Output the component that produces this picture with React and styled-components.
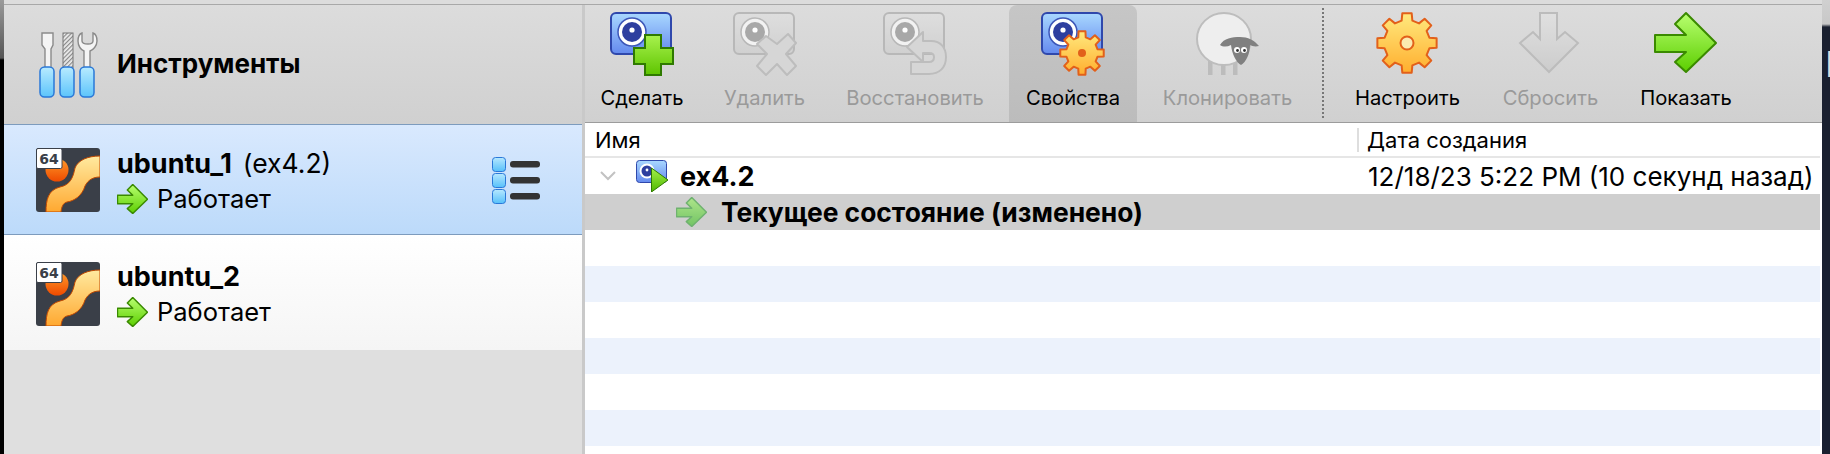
import React, { useId } from "react";
import styled, { createGlobalStyle } from "styled-components";

const Global = createGlobalStyle`
  html, body { margin: 0; padding: 0; background: #fff; }
  body { font-family: Inter, "Liberation Sans", Arial, sans-serif; color: #000; -webkit-font-smoothing: antialiased; }
`;

const Screen = styled.div`
  display: flex;
  width: 1830px;
  height: 454px;
  overflow: hidden;
`;
const LeftEdge = styled.div`
  width: 4px;
  flex: none;
  background: linear-gradient(#9a9a9a 0, #555 58px, #000 60px);
`;
const RightEdge = styled.div`
  width: 8px;
  flex: none;
  display: flex;
  flex-direction: column;
  background: linear-gradient(#d0d0d0 0, #c8c8c8 24px, #1a2030 27px);
  overflow: hidden;
`;
const EdgeGlyph = styled.span`
  margin: 46px 0 0 3px;
  font-size: 36px;
  line-height: 36px;
  color: #dcdcdc;
`;
const Window = styled.div`
  flex: 1;
  min-width: 0;
  display: flex;
  flex-direction: column;
`;
const TitleEdge = styled.div`
  height: 4px;
  flex: none;
  background: #dcdcdc;
  border-bottom: 1px solid #a8a8a8;
`;
const Body = styled.div`
  flex: 1;
  min-height: 0;
  display: flex;
`;
const Sidebar = styled.div`
  width: 578px;
  flex: none;
  display: flex;
  flex-direction: column;
  background: #dfdfdf;
  border-right: 3px solid #c9c9c9;
  box-sizing: content-box;
`;
const ToolsHeader = styled.div`
  height: 119px;
  flex: none;
  display: flex;
  align-items: flex-start;
  padding: 27px 0 0 34px;
  box-sizing: border-box;
  gap: 19px;
  background: linear-gradient(#dcdcdc, #d0d0d0);
`;
const ToolsTitle = styled.div`
  font-size: 26px;
  font-weight: 700;
  line-height: 28px;
  margin-top: 18px;
`;
const VmRow = styled.div`
  display: flex;
  align-items: flex-start;
  box-sizing: border-box;
  height: ${(p) => (p.$selected ? 111 : 115)}px;
  padding: ${(p) => (p.$selected ? 23 : 27)}px 42px 0 32px;
  gap: 17px;
  background: ${(p) =>
    p.$selected ? "linear-gradient(#d9e9fe, #bcdafa)" : "linear-gradient(#ffffff, #f5f5f5)"};
  border-top: ${(p) => (p.$selected ? "1px solid #7d9bbd" : "0")};
  border-bottom: ${(p) => (p.$selected ? "1px solid #7d9bbd" : "0")};
  box-shadow: ${(p) => (p.$selected ? "0 1px 0 #dfe4ea" : "none")};
`;
const VmInfo = styled.div`
  flex: 1;
  display: flex;
  flex-direction: column;
  gap: 5px;
`;
const VmName = styled.div`
  font-size: 27px;
  line-height: 30px;
  font-weight: 700;
`;
const VmSnapshot = styled.span`
  font-weight: 400;
  font-size: 26.5px;
  margin-left: 11px;
`;
const VmState = styled.div`
  display: flex;
  align-items: center;
  gap: 9px;
  font-size: 25.5px;
  line-height: 30px;
`;
const RowMenu = styled.div`
  margin-top: 9px;
  display: flex;
`;
const Main = styled.div`
  flex: 1;
  min-width: 0;
  display: flex;
  flex-direction: column;
`;
const Toolbar = styled.div`
  height: 118px;
  flex: none;
  display: flex;
  gap: 9px;
  box-sizing: border-box;
  padding-right: 2px;
  background: linear-gradient(#dcdcdc, #d0d0d0);
  border-bottom: 1px solid #9c9c9c;
`;
const ToolButton = styled.div`
  width: ${(p) => p.$width}px;
  flex: none;
  display: flex;
  flex-direction: column;
  align-items: center;
  padding-top: 7px;
  box-sizing: border-box;
  border-radius: 8px 8px 0 0;
  background: ${(p) => (p.$active ? "linear-gradient(#c6c6c6, #bcbcbc)" : "transparent")};
`;
const ToolLabel = styled.span`
  margin-top: 10px;
  font-size: 20.2px;
  line-height: 24px;
  white-space: nowrap;
  color: ${(p) => (p.$disabled ? "#9a9a9a" : "#000")};
`;
const ToolSeparator = styled.div`
  width: 0;
  flex: none;
  margin: 3px 5px 4px 4px;
  border-left: 2px dotted #777;
`;
const Table = styled.div`
  flex: 1;
  min-height: 0;
  margin-right: 2px;
  background: #fff;
  display: flex;
  flex-direction: column;
  overflow: hidden;
`;
const TableHead = styled.div`
  height: 35px;
  flex: none;
  display: grid;
  grid-template-columns: 772px 1fr;
  align-items: center;
  box-sizing: border-box;
  border-bottom: 2px solid #e6e6e6;
  font-size: 22px;
`;
const NameHead = styled.div`
  padding-left: 10px;
`;
const DateHead = styled.div`
  border-left: 2px solid #dedede;
  padding-left: 8px;
  line-height: 24px;
`;
const Row = styled.div`
  height: 36px;
  flex: none;
  display: grid;
  grid-template-columns: 772px 1fr;
  align-items: center;
  background: ${(p) => p.$bg};
`;
const TreeCell = styled.div`
  display: flex;
  align-items: center;
  padding-left: ${(p) => p.$indent}px;
  gap: ${(p) => p.$gap}px;
  font-size: ${(p) => p.$size}px;
  font-weight: 700;
  white-space: nowrap;
`;
const DateCell = styled.div`
  padding-left: 11px;
  font-size: 26px;
  white-space: nowrap;
`;
const ChevronBox = styled.span`
  display: flex;
  margin-right: 8px;
`;

const Grad = ({ id, from, to }) => (
  <defs>
    <linearGradient id={id} x1="0" y1="0" x2="0" y2="1">
      <stop offset="0" stopColor={from} />
      <stop offset="1" stopColor={to} />
    </linearGradient>
  </defs>
);

const Camera = ({ gray }) => {
  const id = useId();
  return (
    <>
      <Grad id={id} from={gray ? "#dedede" : "#a9d8ff"} to={gray ? "#d0d0d0" : "#6489ee"} />
      <rect x="1" y="1" width="60" height="41" rx="5" fill={`url(#${id})`} stroke={gray ? "#b8b8b8" : "#2f48ac"} strokeWidth="2" />
      <circle cx="22" cy="20" r="14" fill={gray ? "#f2f2f2" : "#fff"} stroke={gray ? "#b8b8b8" : "#3c56b8"} strokeWidth="1.5" />
      <circle cx="22" cy="20" r="10" fill={gray ? "#a8a8a8" : "#2e3f9f"} />
      <circle cx="22" cy="18" r="2.6" fill="#fff" />
    </>
  );
};

const gearPath = (cx, cy, R, r, n = 8) => {
  const pts = [];
  const step = (Math.PI * 2) / n;
  for (let i = 0; i < n; i++) {
    const a = i * step - Math.PI / 2;
    const w = step * 0.2;
    const w2 = step * 0.3;
    const p = (rad, ang) => `${(cx + rad * Math.cos(ang)).toFixed(2)} ${(cy + rad * Math.sin(ang)).toFixed(2)}`;
    pts.push(p(r, a - w2), p(R, a - w), p(R, a + w), p(r, a + w2));
  }
  return `M${pts.join(" L")} Z`;
};

const Gear = ({ cx, cy, R, r, hole, ring }) => {
  const id = useId();
  return (
    <>
      <Grad id={id} from="#ffe97e" to="#ffae2e" />
      <path d={gearPath(cx, cy, R, r)} fill={`url(#${id})`} stroke="#e2601a" strokeWidth="2" strokeLinejoin="round" />
      <circle cx={cx} cy={cy} r={hole} fill={ring ? "#fbe9b0" : "#e2601a"} stroke="#e2601a" strokeWidth={ring ? 2 : 0} />
    </>
  );
};

const Icon64 = ({ children }) => (
  <svg width="64" height="64" viewBox="0 0 64 64" style={{ overflow: "visible" }}>
    {children}
  </svg>
);

const TakeIcon = () => {
  const id = useId();
  return (
    <Icon64>
      <Camera />
      <Grad id={id} from="#a8f24e" to="#5ec400" />
      <polygon points="35,23 51,23 51,36 63,36 63,52 51,52 51,63 35,63 35,52 24,52 24,36 35,36" fill={`url(#${id})`} stroke="#2f7a00" strokeWidth="2" />
    </Icon64>
  );
};
const DeleteIcon = () => (
  <Icon64>
    <Camera gray />
    <polygon points="33,24 44,32 55,22 63,31 53,42 63,54 54,63 44,52 33,63 24,54 34,42 24,32" fill="#d6d6d6" stroke="#bdbdbd" strokeWidth="2" strokeLinejoin="round" />
  </Icon64>
);
const RestoreIcon = () => (
  <Icon64>
    <Camera gray />
    <path d="M40 20 L40 29 L48 29 C58 29 63 36 63 45 C63 56 56 62 46 62 L28 62 L28 50 L46 50 C50 50 51 48 51 45 C51 42 49 41 46 41 L40 41 L40 50 L24 35 Z" fill="#d6d6d6" stroke="#bdbdbd" strokeWidth="2" strokeLinejoin="round" />
  </Icon64>
);
const PropsIcon = () => (
  <Icon64>
    <Camera />
    <Gear cx={41} cy={41} R={22} r={16} hole={4} />
  </Icon64>
);
const SheepIcon = () => (
  <Icon64>
    {[12, 25, 37].map((x) => (
      <rect key={x} x={x} y="48" width="4.5" height="15" fill="#bcbcbc" />
    ))}
    <ellipse cx="28" cy="27" rx="27" ry="26" fill="#eeeeee" stroke="#bdbdbd" strokeWidth="2" />
    <path d="M24 33 C28 26 36 25 44 25 C52 25 58 28 63 34 C59 35 56 34 54 33 C54 42 50 50 45 53 C40 50 36 42 35 33 C31 35 27 35 24 33 Z" fill="#808080" />
    <circle cx="41" cy="38" r="3" fill="#fff" />
    <circle cx="48" cy="38" r="3" fill="#fff" />
    <circle cx="41.5" cy="38.5" r="1.4" fill="#333" />
    <circle cx="48.5" cy="38.5" r="1.4" fill="#333" />
  </Icon64>
);
const GearIcon = () => (
  <Icon64>
    <Gear cx={31} cy={31} R={30} r={23} hole={6.5} ring />
  </Icon64>
);
const DownIcon = () => {
  const id = useId();
  return (
    <Icon64>
      <Grad id={id} from="#e0e0e0" to="#cccccc" />
      <polygon points="21,1 38,1 38,27 46,20 59,31 30,60 1,31 14,20 21,27" fill={`url(#${id})`} stroke="#bcbcbc" strokeWidth="2" />
    </Icon64>
  );
};
const ARROW = "1,23 32,23 21,12 32,1 62,31 32,60 21,50 32,40 1,40";
const ArrowShape = ({ muted, strokeWidth }) => {
  const id = useId();
  return (
    <>
      <Grad id={id} from={muted ? "#aee58a" : "#b8ff70"} to={muted ? "#72c464" : "#5cce00"} />
      <polygon points={ARROW} fill={`url(#${id})`} stroke={muted ? "#6fb26f" : "#3a8a00"} strokeWidth={strokeWidth} strokeLinejoin="round" />
    </>
  );
};
const ShowIcon = () => (
  <Icon64>
    <ArrowShape strokeWidth={2} />
  </Icon64>
);
const SmallArrow = ({ muted }) => (
  <svg width="31" height="30" viewBox="0 0 63 61" style={{ flex: "none" }}>
    <ArrowShape muted={muted} strokeWidth={3} />
  </svg>
);

const ToolsIcon = () => {
  const h = useId();
  const b = useId();
  return (
    <svg width="60" height="66" viewBox="0 0 60 66">
      <defs>
        <pattern id={h} width="3" height="3" patternUnits="userSpaceOnUse" patternTransform="rotate(45)">
          <rect width="3" height="3" fill="#eee" />
          <rect width="1.2" height="3" fill="#888" />
        </pattern>
      </defs>
      <Grad id={b} from="#b8ebff" to="#5cc4fb" />
      <path d="M4 1 H15 V13 L13 17 V36 H7 V17 L4 13 Z" fill="#f4f4f4" stroke="#8a8a8a" strokeWidth="1.4" />
      <rect x="25" y="1" width="10" height="35" fill={`url(#${h})`} stroke="#777" strokeWidth="1" />
      <path d="M44 1 C41 2 40 6 40 9 C40 14 43 18 46 19 V36 H52 V19 C55 18 59 14 59 9 C59 6 58 2 55 1 V9 C55 11 53 12 50 12 C46 12 44 11 44 9 Z" fill="#f4f4f4" stroke="#8a8a8a" strokeWidth="1.4" />
      {[2, 22, 42].map((x) => (
        <rect key={x} x={x} y="35" width="14" height="30" rx="4.5" fill={`url(#${b})`} stroke="#2a78d8" strokeWidth="1.5" />
      ))}
    </svg>
  );
};

const VmIcon = () => {
  const o = useId();
  const s = useId();
  return (
    <svg width="64" height="64" viewBox="0 0 64 64" style={{ flex: "none" }}>
      <Grad id={o} from="#ff9a2a" to="#ee4a00" />
      <Grad id={s} from="#ffeaa0" to="#ffa830" />
      <rect width="64" height="64" rx="3" fill="#3a3f48" />
      <path d="M10 64 C10 52 12 42 24 39 C34 37 37 30 39 20 C42 12 52 8 64 8 L64 29 C57 29 52 32 49 38 C46 48 38 53 31 54 C27 55 25.5 59 25 64 Z" fill={`url(#${s})`} stroke="#c04800" strokeWidth="1" />
      <circle cx="21" cy="22" r="11.5" fill={`url(#${o})`} />
      <rect x="0.5" y="0.5" width="25.5" height="20" rx="1.5" fill="#fff" stroke="#3a3f48" strokeWidth="1" />
      <text x="13" y="16" textAnchor="middle" fontSize="14" fontWeight="700" fill="#3a3f48" fontFamily="DejaVu Sans, sans-serif">64</text>
    </svg>
  );
};

const ListIcon = () => {
  const b = useId();
  return (
    <svg width="48" height="47" viewBox="0 0 48 47">
      <Grad id={b} from="#b6e8ff" to="#56c0fa" />
      {[0, 16, 32].map((y) => (
        <g key={y}>
          <rect x="0.5" y={y + 0.5} width="13" height="14" rx="3" fill={`url(#${b})`} stroke="#2a78d8" />
          <rect x="18" y={y + 4} width="30" height="6.5" rx="3" fill="#333" />
        </g>
      ))}
    </svg>
  );
};

const SnapshotIcon = () => {
  const c = useId();
  const g = useId();
  return (
    <svg width="32" height="32" viewBox="0 0 32 32" style={{ flex: "none" }}>
      <Grad id={c} from="#a9d8ff" to="#6489ee" />
      <Grad id={g} from="#a4f04a" to="#4fb800" />
      <rect x="0.5" y="0.5" width="30" height="22" rx="3" fill={`url(#${c})`} stroke="#2f48ac" />
      <circle cx="11" cy="11" r="7.5" fill="#fff" />
      <circle cx="11" cy="11" r="5.5" fill="#2e3f9f" />
      <circle cx="11" cy="10" r="1.4" fill="#fff" />
      <polygon points="15.5,8 32,20 15.5,32" fill={`url(#${g})`} stroke="#2f7a00" />
    </svg>
  );
};

const Chevron = () => (
  <svg width="16" height="10" viewBox="0 0 16 10" style={{ flex: "none" }}>
    <path d="M1 1 L8 8 L15 1" fill="none" stroke="#c2c2c2" strokeWidth="2" />
  </svg>
);

const tools = [
  { label: "Сделать", width: 114, icon: <TakeIcon /> },
  { label: "Удалить", width: 113, icon: <DeleteIcon />, disabled: true },
  { label: "Восстановить", width: 170, icon: <RestoreIcon />, disabled: true },
  { label: "Свойства", width: 128, icon: <PropsIcon />, active: true },
  { label: "Клонировать", width: 163, icon: <SheepIcon />, disabled: true },
  { sep: true },
  { label: "Настроить", width: 139, icon: <GearIcon /> },
  { label: "Сбросить", width: 129, icon: <DownIcon />, disabled: true },
  { label: "Показать", width: 124, icon: <ShowIcon /> },
];

const stripes = ["#ffffff", "#ecf2fc", "#ffffff", "#ecf2fc", "#ffffff", "#ecf2fc", "#ffffff"];

export default function App() {
  return (
    <>
      <Global />
      <Screen>
        <LeftEdge />
        <Window>
          <TitleEdge />
          <Body>
            <Sidebar>
              <ToolsHeader>
                <ToolsIcon />
                <ToolsTitle>Инструменты</ToolsTitle>
              </ToolsHeader>
              <VmRow $selected>
                <VmIcon />
                <VmInfo>
                  <VmName>
                    ubuntu_1<VmSnapshot>(ex4.2)</VmSnapshot>
                  </VmName>
                  <VmState>
                    <SmallArrow />
                    Работает
                  </VmState>
                </VmInfo>
                <RowMenu>
                  <ListIcon />
                </RowMenu>
              </VmRow>
              <VmRow>
                <VmIcon />
                <VmInfo>
                  <VmName>ubuntu_2</VmName>
                  <VmState>
                    <SmallArrow />
                    Работает
                  </VmState>
                </VmInfo>
              </VmRow>
            </Sidebar>
            <Main>
              <Toolbar>
                {tools.map((t, i) =>
                  t.sep ? (
                    <ToolSeparator key={i} />
                  ) : (
                    <ToolButton key={t.label} $width={t.width} $active={t.active}>
                      {t.icon}
                      <ToolLabel $disabled={t.disabled}>{t.label}</ToolLabel>
                    </ToolButton>
                  )
                )}
              </Toolbar>
              <Table>
                <TableHead>
                  <NameHead>Имя</NameHead>
                  <DateHead>Дата создания</DateHead>
                </TableHead>
                <Row $bg="#fff">
                  <TreeCell $indent={15} $gap={12} $size={27}>
                    <ChevronBox>
                      <Chevron />
                    </ChevronBox>
                    <SnapshotIcon />
                    ex4.2
                  </TreeCell>
                  <DateCell>12/18/23 5:22 PM (10 секунд назад)</DateCell>
                </Row>
                <Row $bg="#cfcfcf">
                  <TreeCell $indent={91} $gap={14} $size={26.4}>
                    <SmallArrow muted />
                    Текущее состояние (изменено)
                  </TreeCell>
                </Row>
                {stripes.map((c, i) => (
                  <Row key={i} $bg={c} />
                ))}
              </Table>
            </Main>
          </Body>
        </Window>
        <RightEdge>
          <EdgeGlyph>P</EdgeGlyph>
        </RightEdge>
      </Screen>
    </>
  );
}
